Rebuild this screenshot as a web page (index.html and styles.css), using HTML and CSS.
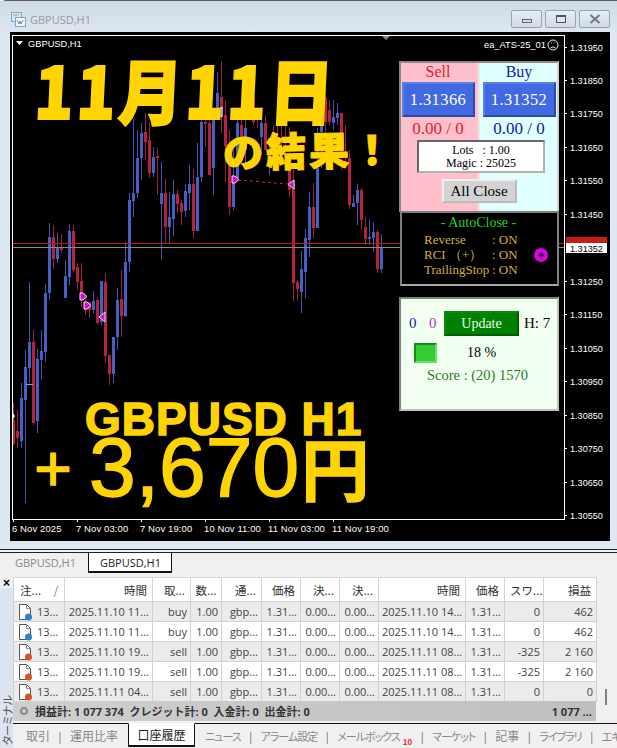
FILE: index.html
```html
<!DOCTYPE html>
<html lang="ja">
<head>
<meta charset="utf-8">
<title>GBPUSD,H1</title>
<link rel="stylesheet" href="styles.css">
</head>
<body>
<svg class="defs" width="0" height="0">
  <symbol id="doc-blue" viewBox="0 0 18 18">
    <path d="M3.500 1.500h7l4 4v9h-3v2h-8z" fill="#fff" stroke="#555"/>
    <path d="M10.500 1.500v4h4" fill="none" stroke="#888"/>
    <circle cx="12.500" cy="14" r="3.500" fill="#2a83c9"/>
  </symbol>
  <symbol id="doc-red" viewBox="0 0 18 18">
    <path d="M3.500 1.500h7l4 4v9h-3v2h-8z" fill="#fff" stroke="#555"/>
    <path d="M10.500 1.500v4h4" fill="none" stroke="#888"/>
    <circle cx="12.500" cy="14" r="3.500" fill="#d9512a"/>
  </symbol>
</svg>
<div class="app">
  <section class="window">
    <header class="titlebar">
      <svg class="title-icon" width="15" height="15" viewBox="0 0 15 15">
        <rect x="0.500" y="0.500" width="10" height="9" fill="#d5e6f5" stroke="#7ea6c8"/>
        <rect x="4.500" y="5.500" width="10" height="9" fill="#eef5fb" stroke="#7ea6c8"/>
        <path d="M6 8l2 4 1-3 1 3 2-4" fill="none" stroke="#678" stroke-width="0.800"/>
        <path d="M2 3h6" stroke="#7ea6c8"/>
      </svg>
      <span class="title-text">GBPUSD,H1</span>
      <div class="win-controls">
        <button class="win-btn"><span class="glyph-min"></span></button>
        <button class="win-btn"><span class="glyph-max"></span></button>
        <button class="win-btn">
          <svg width="12" height="10" viewBox="0 0 12 10"><path d="M1.500 1l9 8M10.500 1l-9 8" stroke="#777" stroke-width="2"/></svg>
        </button>
      </div>
    </header>
    <div class="chart">
      <svg class="plot" width="600" height="509" viewBox="10 32 600 509">
        <g class="candles" transform="translate(0.5 0)">
          <path class="wick blue" d="M21 383V448M25 350V503M29 282V383M37 349V433M41 330V380M45 284V362M49 223V300M57 233V263M65 260V298M69 224V285M93 291V313M101 281V325M113 337V383M117 288V350M125 242V317M129 193V272M133 119V217M137 130V198M141 123V180M153 147V177M161 162V260M169 192V243M173 180V236M185 184V217M189 165V210M197 143V231M201 117V182M213 108V195M217 72V115M233 150V210M237 120V178M245 110V170M261 107V155M269 140V175M301 251V313M305 229V298M309 192V257M317 128V228M321 122V168M333 100V130M337 103V125M353 195V207M357 184V225M369 220V245M373 222V252M381 234V273"/>
          <path class="wick red" d="M13 403V445M17 410V448M33 330V425M53 225V269M61 234V253M73 225V273M77 263V290M81 263V307M85 295V315M89 307V318M97 297V325M105 273V363M109 355V385M121 270V337M145 113V160M149 122V178M157 148V195M165 179V244M177 190V213M181 200V225M193 169V238M205 120V147M209 113V175M221 61V133M225 100V182M229 130V215M241 118V165M253 92V125M257 110V128M265 115V150M273 125V160M277 125V150M281 125V150M285 125V160M289 127V197M293 170V301M297 280V301M313 183V238M325 95V135M329 100V125M341 113V170M345 125V165M349 150V209M361 188V230M365 217V245M377 230V273"/>
          <path class="body blue" d="M21 398V441M25 367V400M29 342V368M37 359V421M41 351V360M45 293V352M49 237V293M57 247V259M65 276V298M69 231V277M93 301V310M101 281V322M113 337V374M117 300V337M125 262V316M129 200V262M133 193V201M137 158V193M141 133V158M153 157V173M161 193V204M169 217V227M173 194V219M185 191V211M189 184V193M197 177V231M201 122V177M213 113V168M217 93V110M233 177V207M237 123V178M245 128V150M261 123V137M269 150V165M301 269V292M305 238V272M309 207V240M317 168V228M321 122V132M333 117V123M337 113V118M353 203V207M357 190V203M369 237V239M373 232V238M381 247V269"/>
          <path class="body red" d="M13 420V444M17 431V438M33 342V423M53 237V259M61 247V250M73 231V270M77 267V282M81 281V297M85 303V310M89 302V310M97 300V323M105 282V356M109 355V374M121 299V316M145 132V142M149 140V173M157 156V158M165 193V227M177 194V204M181 203V212M193 184V231M205 122V124M209 123V175M221 97V115M225 115V146M229 160V207M241 125V150M253 97V122M265 123V150M289 170V190M293 180V283M297 282V289M313 207V228M325 98V122M329 110V122M341 113V133M349 158V205M361 190V220M365 227V239M377 232V269"/>
        </g>
        <path class="price-red" d="M13 243.500H564"/>
        <path class="price-grey" d="M13 247.500H564"/>
        <path class="frame" d="M12.500 35.500H564.500V519.500H12.500Z"/>
        <path class="frame" d="M564 47.500h3M564 80.500h3M564 113.500h3M564 147.500h3M564 180.500h3M564 214.500h3M564 281.500h3M564 314.500h3M564 348.500h3M564 381.500h3M564 415.500h3M564 448.500h3M564 482.500h3M564 515.500h3M13.500 519v3M77.500 519v3M141.500 519v3M205.500 519v3M269.500 519v3M333.500 519v3"/>
        <path class="hline" d="M26 384.500h7"/>
        <path class="trade-link" d="M238 180L288 184"/>
        <path d="M16 41h7l-3.500 4z" fill="#fff"/>
        <path d="M382 36h8l-4 4z" fill="#888"/>
        <path class="arrow-left-blue" d="M222 107v10l-6-5z"/>
        <path class="arrow-left" d="M294 180v9l-6-4.500z"/>
        <path class="arrow-left" d="M105 312v10l-6-5z"/>
        <path class="arrow-right" d="M232 176h3l4 3.500-4 3.500h-3z"/>
        <path class="arrow-right" d="M80 293h3l4 3.500-4 3.500h-3z"/>
        <path class="arrow-right" d="M84 302h3l4 3.500-4 3.500h-3z"/>
        <path d="M13 413l2 3-2 3z" fill="#fff"/>
        <text class="sym" x="28" y="47">GBPUSD,H1</text>
        <text class="sym" x="484" y="48">ea_ATS-25_01</text>
        <g class="face">
          <circle cx="553" cy="45" r="5"/>
          <path d="M550.500 48q2.500-2.500 5 0M551 43h.8M554.500 43h.8"/>
        </g>
        <path class="tag-red" d="M566 237h41v7h-41z"/>
        <path class="tag-white" d="M566 243h41v10h-41z"/>
        <g class="axis">
          <text x="570" y="51">1.31950</text>
          <text x="570" y="84">1.31850</text>
          <text x="570" y="117">1.31750</text>
          <text x="570" y="151">1.31650</text>
          <text x="570" y="184">1.31550</text>
          <text x="570" y="218">1.31450</text>
          <text x="570" y="285">1.31250</text>
          <text x="570" y="318">1.31150</text>
          <text x="570" y="352">1.31050</text>
          <text x="570" y="385">1.30950</text>
          <text x="570" y="419">1.30850</text>
          <text x="570" y="452">1.30750</text>
          <text x="570" y="486">1.30650</text>
          <text x="570" y="519">1.30550</text>
          <text class="axis-current" x="570" y="252">1.31352</text>
        </g>
        <g class="axis-time">
          <text x="12" y="532">6 Nov 2025</text>
          <text x="76" y="532">7 Nov 03:00</text>
          <text x="140" y="532">7 Nov 19:00</text>
          <text x="204" y="532">10 Nov 11:00</text>
          <text x="268" y="532">11 Nov 03:00</text>
          <text x="332" y="532">11 Nov 19:00</text>
        </g>
      </svg>

      <div class="trade">
        <div class="trade-cols">
          <div class="trade-side side-sell">
            <div class="side-name">Sell</div>
            <button class="price-btn">1.31366</button>
            <div class="side-pnl">0.00 / 0</div>
          </div>
          <div class="trade-side side-buy">
            <div class="side-name">Buy</div>
            <button class="price-btn">1.31352</button>
            <div class="side-pnl">0.00 / 0</div>
          </div>
        </div>
        <div class="lots"><span class="lots-line">Lots &nbsp;&nbsp;: 1.00</span><span class="lots-line">Magic : 25025</span></div>
        <button class="all-close">All Close</button>
      </div>

      <div class="autoclose">
        <div class="ac-title">- AutoClose -</div>
        <div class="ac-body">
          <div class="ac-grid">
            <span>Reverse</span><span>: ON</span>
            <span>RCI （+）</span><span>: ON</span>
            <span>TrailingStop</span><span>: ON</span>
          </div>
          <span class="ac-dot"></span>
        </div>
      </div>

      <div class="score">
        <div class="score-row">
          <span class="cnt-blue">0</span>
          <span class="cnt-mag">0</span>
          <button class="update">Update</button>
          <span class="hval">H: 7</span>
        </div>
        <div class="score-row2">
          <span class="swatch"></span>
          <span class="pct">18 %</span>
        </div>
        <div class="score-text">Score : (20) 1570</div>
      </div>

      <div class="ov ov-date">11月11日</div>
      <div class="ov ov-result">の結果！</div>
      <div class="ov ov-pair">GBPUSD H1</div>
      <div class="ov ov-profit"><span class="ov-plus">＋</span><span>3,670</span><span class="ov-yen">円</span></div>
    </div>
  </section>

  <nav class="chart-tabs">
    <span class="ctab">GBPUSD,H1</span>
    <span class="ctab ctab-active">GBPUSD,H1</span>
  </nav>

  <section class="terminal">
    <aside class="side-strip">
      <span class="strip-x">×</span>
      <span class="strip-label">ターミナル</span>
    </aside>
    <div class="term-main">
      <div class="table-wrap">
        <table class="grid">
          <colgroup>
            <col class="c1"><col class="c2"><col class="c3"><col class="c4"><col class="c5"><col class="c6"><col class="c7"><col class="c8"><col class="c9"><col class="c10"><col class="c11"><col class="c12">
          </colgroup>
          <thead>
            <tr>
              <th class="al">注... <span class="sort">/</span></th><th>時間</th><th>取...</th><th class="ac">数...</th><th>通...</th><th>価格</th><th>決...</th><th>決...</th><th>時間</th><th>価格</th><th>スワ...</th><th>損益</th>
            </tr>
          </thead>
          <tbody>
            <tr><td class="al"><span class="ticket"><svg class="doc"><use href="#doc-blue"/></svg>13...</span></td><td>2025.11.10 11...</td><td>buy</td><td>1.00</td><td>gbp...</td><td>1.31...</td><td>0.00...</td><td>0.00...</td><td>2025.11.10 14...</td><td>1.31...</td><td>0</td><td>462</td></tr>
            <tr><td class="al"><span class="ticket"><svg class="doc"><use href="#doc-blue"/></svg>13...</span></td><td>2025.11.10 11...</td><td>buy</td><td>1.00</td><td>gbp...</td><td>1.31...</td><td>0.00...</td><td>0.00...</td><td>2025.11.10 14...</td><td>1.31...</td><td>0</td><td>462</td></tr>
            <tr><td class="al"><span class="ticket"><svg class="doc"><use href="#doc-red"/></svg>13...</span></td><td>2025.11.10 19...</td><td>sell</td><td>1.00</td><td>gbp...</td><td>1.31...</td><td>0.00...</td><td>0.00...</td><td>2025.11.11 08...</td><td>1.31...</td><td>-325</td><td>2 160</td></tr>
            <tr><td class="al"><span class="ticket"><svg class="doc"><use href="#doc-red"/></svg>13...</span></td><td>2025.11.10 19...</td><td>sell</td><td>1.00</td><td>gbp...</td><td>1.31...</td><td>0.00...</td><td>0.00...</td><td>2025.11.11 08...</td><td>1.31...</td><td>-325</td><td>2 160</td></tr>
            <tr><td class="al"><span class="ticket"><svg class="doc"><use href="#doc-red"/></svg>13...</span></td><td>2025.11.11 04...</td><td>sell</td><td>1.00</td><td>gbp...</td><td>1.31...</td><td>0.00...</td><td>0.00...</td><td>2025.11.11 08...</td><td>1.31...</td><td>0</td><td>0</td></tr>
          </tbody>
        </table>
        <div class="scrollbar"><span class="thumb"></span></div>
      </div>
      <div class="summary">
        <span class="sum-dot"></span>
        <span class="sum-text">損益計: 1 077 374&nbsp; クレジット計: 0&nbsp; 入金計: 0&nbsp; 出金計: 0</span>
        <span class="sum-total">1 077 ...</span>
      </div>
      <nav class="term-tabs">
        <span class="ttab">取引</span><span class="sep">|</span>
        <span class="ttab">運用比率</span>
        <span class="ttab ttab-active">口座履歴</span>
        <span class="ttab kana">ニュース</span><span class="sep">|</span>
        <span class="ttab kana">アラーム設定</span><span class="sep">|</span>
        <span class="ttab kana">メールボックス<sub class="badge">10</sub></span><span class="sep">|</span>
        <span class="ttab kana">マーケット</span><span class="sep">|</span>
        <span class="ttab">記事</span><span class="sep">|</span>
        <span class="ttab kana">ライブラリ</span><span class="sep">|</span>
        <span class="ttab kana">エキ</span>
      </nav>
    </div>
  </section>
</div>
</body>
</html>
```

FILE: styles.css
```css
* { box-sizing: border-box; }
html, body { margin: 0; padding: 0; }
body {
  width: 617px;
  height: 748px;
  overflow: hidden;
  background: #f0f0f0;
  font-family: "Open Sans", "Noto Sans CJK JP", sans-serif;
}
.defs { position: absolute; }
button { font: inherit; padding: 0; margin: 0; }

.app { display: flex; flex-direction: column; width: 617px; height: 748px; }

/* window */
.window {
  height: 550px;
  flex: none;
  background: #dde8f3;
  border-top: 1px solid #5a5f66;
  border-bottom: 1px solid #222;
  border-top-left-radius: 6px;
  padding: 0 7px 8px 10px;
  display: flex;
  flex-direction: column;
}
.titlebar {
  height: 31px;
  flex: none;
  margin: 0 -7px 0 -10px;
  padding: 0 7px 0 11px;
  display: flex;
  align-items: center;
  background: linear-gradient(180deg, #cfdbe6, #dbe6f0);
}
.title-icon { flex: none; margin-top: 5px; }
.title-text {
  margin: 5px 0 0 4px;
  font-size: 11px;
  color: #999;
  font-family: "Open Sans", sans-serif;
}
.win-controls { margin: 4px 0 0 auto; display: flex; gap: 3px; }
.win-btn {
  width: 31px;
  height: 18px;
  border: 1px solid #98a4b0;
  border-radius: 2px;
  background: linear-gradient(180deg, #e6eef6, #cfdbe7);
  display: flex;
  align-items: center;
  justify-content: center;
}
.glyph-min { width: 10px; height: 4px; margin-top: 4px; background: #d8dde2; border: 1px solid #666; }
.glyph-max { width: 10px; height: 8px; border: 1px solid #555; border-top-width: 2px; background: #dfe6ec; }

/* chart */
.chart { position: relative; flex: none; width: 600px; height: 509px; background: #000; }
.plot { display: block; position: absolute; left: 0; top: 0; }
.wick { fill: none; stroke-width: 1; shape-rendering: crispEdges; }
.body { fill: none; stroke-width: 3; shape-rendering: crispEdges; }
.wick.blue { stroke: #3d55b0; }
.wick.red { stroke: #9c1f3c; }
.body.blue { stroke: #4560c4; }
.body.red { stroke: #b5213f; }
.price-red { stroke: #c41c1c; fill: none; shape-rendering: crispEdges; }
.price-grey { stroke: #8a8a8a; fill: none; shape-rendering: crispEdges; }
.frame { stroke: #fff; fill: none; shape-rendering: crispEdges; }
.hline { stroke: #4cc0d8; fill: none; }
.trade-link { stroke: #c8205a; fill: none; stroke-dasharray: 3 3; }
.arrow-left-blue { fill: #3553c0; stroke: #fff; }
.arrow-left { fill: #b020c0; stroke: #f4c8f4; }
.arrow-right { fill: #d010d0; stroke: #f6e0f6; }
.sym { font: 9.300px "Liberation Sans", sans-serif; fill: #fff; }
.face { fill: none; stroke: #fff; stroke-width: 0.9; }
.tag-red { fill: #cc1a1a; }
.tag-white { fill: #fff; }
.axis text { font: 9.100px "Liberation Sans", sans-serif; fill: #fff; }
.axis .axis-current { fill: #000; }
.axis-time text { font: 9.500px "Liberation Sans", sans-serif; fill: #fff; letter-spacing: 0.1px; }

/* trading panel */
.trade {
  position: absolute;
  left: 389px;
  top: 29px;
  width: 160px;
  height: 151px;
  border-top: 2px solid #8a8a8a;
  border-left: 2px solid #8a8a8a;
  border-right: 2px solid #d0d0d0;
  background: linear-gradient(90deg, #ffc0cb 49.500%, #e8e8e8 49.500%, #e8e8e8 50.500%, #e0ffff 50.500%);
  display: flex;
  flex-direction: column;
  align-items: center;
  font-family: "Liberation Serif", serif;
}
.trade-cols { display: grid; grid-template-columns: 1fr 1fr; width: 100%; }
.trade-side { display: flex; flex-direction: column; align-items: center; }
.side-sell { padding-right: 4px; }
.side-buy { padding-left: 2px; }
.side-name { height: 19px; font-size: 16px; line-height: 18px; }
.side-sell .side-name, .side-sell .side-pnl { color: #e0202a; }
.side-buy .side-name, .side-buy .side-pnl { color: #1420a8; }
.price-btn {
  width: 73px;
  height: 35px;
  background: #4169e1;
  color: #fff;
  font-size: 16.500px;
  letter-spacing: 0.4px;
  border: 2px solid;
  border-color: #5a80f0 #2c4aa8 #2c4aa8 #5a80f0;
}
.side-pnl { height: 23px; font-size: 17px; line-height: 23px; }
.lots {
  width: 128px;
  height: 33px;
  margin-left: 4px;
  background: #fff;
  border: 2px solid;
  border-color: #666 #b0b0b0 #b0b0b0 #666;
  font-size: 12px;
  line-height: 13px;
  color: #000;
  display: flex;
  flex-direction: column;
  align-items: center;
  justify-content: center;
}
.all-close {
  width: 75px;
  height: 24px;
  margin-top: 6px;
  font-size: 15px;
  background: #d3d3d3;
  color: #000;
  border: 2px solid;
  border-color: #eee #bbb #bbb #eee;
  font-family: inherit;
}

.autoclose {
  position: absolute;
  left: 390px;
  top: 179px;
  width: 159px;
  height: 75px;
  background: #000;
  border: 2px solid #808080;
  border-bottom-color: #a8a8a8;
  font-family: "Liberation Serif", serif;
  font-size: 13px;
  color: #d4b040;
}
.ac-title { height: 19px; padding-right: 2px; text-align: center; color: #22d022; font-size: 14px; line-height: 20px; }
.ac-body { display: flex; align-items: center; padding-left: 22px; }
.ac-grid { display: grid; grid-template-columns: 68px auto; grid-auto-rows: 15px; line-height: 15px; white-space: nowrap; }
.ac-dot {
  width: 14px;
  height: 14px;
  margin-left: 16px;
  border-radius: 50%;
  background: radial-gradient(circle, #2a0a60 0 2px, #e000e0 3px);
}

.score {
  position: absolute;
  left: 389px;
  top: 265px;
  width: 160px;
  height: 114px;
  background: #f0fff0;
  border: 2px solid;
  border-color: #808080 #c0c0c0 #c0c0c0 #808080;
  font-family: "Liberation Serif", serif;
  font-size: 15px;
}
.score-row { display: flex; align-items: center; height: 25px; margin-top: 12px; padding-left: 8px; }
.cnt-blue { color: #1420a8; width: 20px; }
.cnt-mag { color: #c030c0; width: 15px; }
.update {
  width: 75px;
  height: 25px;
  background: #008000;
  color: #e8ffe8;
  font-size: 14px;
  font-family: inherit;
  border: 2px solid;
  border-color: #0a8a0a #005c00 #005c00 #0a8a0a;
}
.hval { margin-left: 5px; color: #000; }
.score-row2 { display: flex; align-items: center; height: 20px; margin-top: 7px; padding-left: 13px; }
.swatch { width: 23px; height: 20px; background: #32cd32; border: 2px solid; border-color: #1a8a1a #6ae06a #6ae06a #1a8a1a; }
.pct { margin-left: 30px; color: #000; font-size: 14px; }
.score-text { margin-top: 3px; padding-left: 26px; color: #2a7a2a; font-size: 14.500px; line-height: 18px; }

/* overlay captions */
.ov { position: absolute; color: #ffd400; white-space: nowrap; }
.ov-date {
  left: 25px;
  top: 21px;
  font: 900 71px/70px "Noto Sans CJK JP", sans-serif;
  letter-spacing: 3px;
  transform-origin: left center;
  transform: scaleX(0.905) skewX(-3deg);
  -webkit-text-stroke: 2px #ffd400;
}
.ov-result {
  left: 213px;
  top: 95px;
  font: 900 40px/44px "Noto Sans CJK JP", sans-serif;
  letter-spacing: 3px;
  transform: rotate(-1deg);
  -webkit-text-stroke: 1px #ffd400;
}
.ov-pair {
  left: 75px;
  top: 370px;
  font: 700 46px/34px "Liberation Sans", sans-serif;
  letter-spacing: 1px;
  -webkit-text-stroke: 1.500px #ffd400;
}
.ov-profit {
  left: 21px;
  top: 404px;
  display: flex;
  align-items: center;
  height: 62px;
  font: 400 84px/62px "Liberation Sans", sans-serif;
  -webkit-text-stroke: 1.400px #ffd400;
}
.ov-plus { width: 58px; font: 700 44px/62px "Noto Sans CJK JP", sans-serif; }
.ov-yen { font: 700 68px/62px "Noto Sans CJK JP", sans-serif; margin-left: 2px; }

/* chart tabs */
.chart-tabs {
  height: 22px;
  flex: none;
  margin-top: 2px;
  border-top: 1px solid #222;
  display: flex;
  background: #f0f0f0;
  font: 400 11px "Open Sans", sans-serif;
}
.ctab { width: 88px; padding-left: 15px; line-height: 19px; color: #888; }
.ctab-active {
  width: 84px;
  height: 20px;
  padding-left: 11px;
  color: #222;
  background: #fff;
  border: 1px solid #111;
  border-top: 0;
  border-bottom-width: 2px;
}

/* terminal */
.terminal { flex: 1; display: flex; min-height: 0; background: #f0f0f0; }
.side-strip {
  width: 13px;
  flex: none;
  background: linear-gradient(180deg, #f0f0f0 0 14px, #d9e6f2 14px);
  display: flex;
  flex-direction: column;
  justify-content: space-between;
  align-items: center;
}
.strip-x { font: 700 12px/14px "Liberation Sans", sans-serif; color: #000; padding-top: 2px; }
.strip-label {
  writing-mode: vertical-rl;
  text-orientation: sideways;
  transform: rotate(180deg);
  white-space: nowrap;
  font: 400 11px/12px "Noto Sans CJK JP", sans-serif;
  font-feature-settings: "palt";
  color: #555;
  margin-bottom: 3px;
}
.term-main { flex: 1; min-width: 0; padding-top: 3px; display: flex; flex-direction: column; }
.table-wrap { display: flex; height: 124px; flex: none; background: #f0f0f0; }
.grid {
  table-layout: fixed;
  border-collapse: collapse;
  width: 583px;
  height: 124px;
  flex: none;
  background: #fff;
  font-family: "Open Sans", "Noto Sans CJK JP", sans-serif;
  font-size: 11px;
  color: #444;
}
.c1 { width: 51px; } .c2 { width: 88px; } .c3 { width: 38px; } .c4 { width: 31px; }
.c5 { width: 40px; } .c6 { width: 39px; } .c7 { width: 39px; } .c8 { width: 39px; }
.c9 { width: 87px; } .c10 { width: 39px; } .c11 { width: 39px; } .c12 { width: 53px; }
.grid th {
  height: 24px;
  padding: 0 5px;
  font-weight: 400;
  font-family: "Noto Sans CJK JP", sans-serif;
  font-size: 11.500px;
  color: #333;
  text-align: right;
  border: 1px solid #d4d4d4;
  white-space: nowrap;
  overflow: hidden;
}
.grid td {
  height: 20px;
  padding: 0 3px;
  text-align: right;
  border: 1px solid #d0d0d0;
  white-space: nowrap;
  overflow: hidden;
}
.grid tbody tr:nth-child(odd) { background: #ebebeb; }
.grid .al { text-align: left; padding-left: 6px; }
.grid .ac { text-align: center; padding: 0; }
.grid td.al { padding-left: 2px; }
.ticket { display: flex; align-items: center; gap: 3px; height: 18px; }
.sort { margin-left: 10px; color: #777; }
.doc { width: 18px; height: 18px; flex: none; }
.scrollbar { flex: 1; position: relative; background: #f0f0f0; }
.thumb { position: absolute; left: 8px; top: 112px; width: 2px; height: 16px; background: #808080; }
.summary {
  height: 20px;
  width: 583px;
  flex: none;
  background: linear-gradient(90deg, #cfcfcf, #bfbfbf);
  display: flex;
  align-items: center;
  padding: 0 4px 0 7px;
  font: 700 11px "Open Sans", "Noto Sans CJK JP", sans-serif;
  color: #333;
  white-space: nowrap;
}
.sum-dot { width: 8px; height: 8px; border-radius: 50%; border: 2px solid #8c8c8c; margin-right: 7px; }
.sum-total { margin-left: auto; }
.term-tabs {
  display: flex;
  align-items: center;
  height: 24px;
  flex: none;
  margin-top: 2px;
  padding-left: 13px;
  border-top: 1px solid #111;
  font: 400 12px/20px "Noto Sans CJK JP", sans-serif;
  font-feature-settings: "palt";
  color: #888;
  white-space: nowrap;
}
.ttab { flex: none; }
.kana { font-size: 11px; letter-spacing: -1px; }
.sep { width: 20px; flex: none; text-align: center; color: #666; font-size: 11px; }
.ttab-active {
  width: 67px;
  height: 24px;
  margin: -1px 10px 0 10px;
  padding-top: 1px;
  text-align: center;
  color: #222;
  background: #fff;
  border: 1px solid #111;
  border-top-color: #fff;
  border-bottom-width: 2px;
}
.badge { font-size: 8px; line-height: 0; color: #e03030; margin-left: 3px; font-weight: 700; letter-spacing: 0; vertical-align: -4px; }
```
